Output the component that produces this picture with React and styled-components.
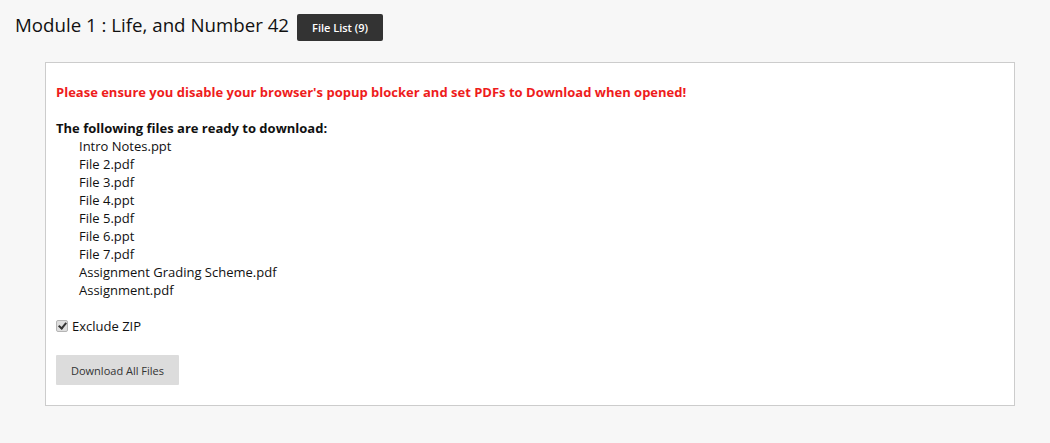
import styled, { createGlobalStyle } from "styled-components";

const GlobalStyle = createGlobalStyle`
  body {
    margin: 0;
    background: #f7f7f7;
    font-family: "Open Sans", "Liberation Sans", sans-serif;
    color: #111;
  }
`;

const Page = styled.div`
  padding: 14px 35px 37px 15px;
`;

const Header = styled.div`
  display: flex;
  align-items: center;
  gap: 8px;
  height: 27px;
  margin-bottom: 21px;

  h1 {
    margin: 0;
    font-size: 18.7px;
    font-weight: 400;
    color: #111;
    position: relative;
    top: -3px;
  }
`;

const FileListButton = styled.button`
  height: 27px;
  padding: 0 15px;
  border: 0;
  border-radius: 2px;
  background: #333;
  color: #fff;
  font-family: inherit;
  font-size: 11px;
  font-weight: 600;
`;

const Panel = styled.section`
  margin-left: 30px;
  background: #fff;
  border: 1px solid #ccc;
  padding: 20px 10px 20px 10px;
  font-size: 13px;
  line-height: 18px;

  .warning {
    color: #ee1c1c;
    font-weight: 700;
    margin: 0 0 18px;
  }

  .ready {
    font-weight: 700;
    margin: 0;
  }
`;

const FileItems = styled.ul`
  list-style: none;
  margin: 0 0 18px;
  padding: 0 0 0 23px;
`;

const CheckRow = styled.label`
  display: flex;
  align-items: center;
  gap: 4px;
  height: 18px;
  margin-bottom: 20px;
`;

const CheckBox = styled.input`
  appearance: none;
  margin: 0;
  width: 12px;
  height: 12px;
  border: 1px solid #b5b5b5;
  border-radius: 2px;
  background: #dedede;
  position: relative;

  &:checked::after {
    content: "";
    position: absolute;
    left: 3px;
    top: 0px;
    width: 3px;
    height: 6px;
    border: solid #333;
    border-width: 0 2px 2px 0;
    transform: rotate(40deg);
  }
`;

const DownloadButton = styled.button`
  height: 30px;
  padding: 0 15px;
  border: 0;
  border-radius: 1px;
  background: #dcdcdc;
  color: #333;
  font-family: inherit;
  font-size: 11px;
`;

const files = [
  "Intro Notes.ppt",
  "File 2.pdf",
  "File 3.pdf",
  "File 4.ppt",
  "File 5.pdf",
  "File 6.ppt",
  "File 7.pdf",
  "Assignment Grading Scheme.pdf",
  "Assignment.pdf",
];

const App = () => {
  return (
    <Page>
      <GlobalStyle />
      <Header>
        <h1>Module 1 : Life, and Number 42</h1>
        <FileListButton>File List ({files.length})</FileListButton>
      </Header>
      <Panel>
        <p className="warning">
          Please ensure you disable your browser's popup blocker and set PDFs to Download when opened!
        </p>
        <p className="ready">The following files are ready to download:</p>
        <FileItems>
          {files.map((f) => (
            <li key={f}>{f}</li>
          ))}
        </FileItems>
        <CheckRow>
          <CheckBox type="checkbox" defaultChecked />
          <span>Exclude ZIP</span>
        </CheckRow>
        <DownloadButton>Download All Files</DownloadButton>
      </Panel>
    </Page>
  );
};

export default App;
